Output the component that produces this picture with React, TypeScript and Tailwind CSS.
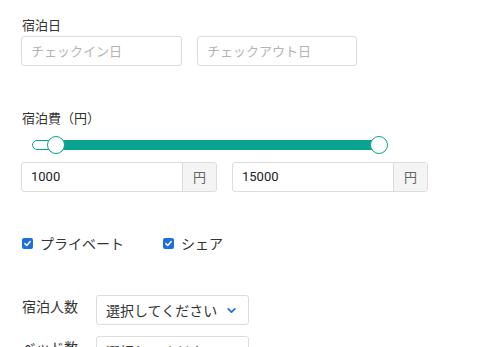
import { ChevronDown } from "lucide-react";

const font = { fontFamily: '"Noto Sans CJK JP", "Noto Sans", sans-serif' };

function Check() {
  return (
    <span className="inline-flex h-[11px] w-[11px] items-center justify-center rounded-[2px] bg-[#1d6fe0]">
      <svg viewBox="0 0 12 12" className="h-[9px] w-[9px]">
        <path d="M2.5 6.2 5 8.6 9.6 3.4" fill="none" stroke="white" strokeWidth="2" strokeLinecap="round" strokeLinejoin="round" />
      </svg>
    </span>
  );
}

function PriceInput({ value, w }: { value: string; w: string }) {
  return (
    <div className={`flex h-[30px] ${w} rounded-[3px] border border-[#dcdcdc] overflow-hidden`}>
      <div className="flex-1 flex items-center pl-[9px] text-[13px] text-[#222]" style={{ fontFamily: "Roboto, Arial, sans-serif" }}>
        {value}
      </div>
      <div className="w-[34px] flex items-center justify-center border-l border-[#dcdcdc] bg-[#f4f4f4] text-[13px] text-[#666]">
        円
      </div>
    </div>
  );
}

function SelectBox() {
  return (
    <div className="flex h-[30px] w-[153px] items-center rounded-[3px] border border-[#dcdcdc] bg-white pl-[9px] text-[14px] text-[#333]">
      <span>選択してください</span>
      <ChevronDown className="ml-[8px] h-[13px] w-[13px] text-[#1d6fe0]" strokeWidth={3.2} />
    </div>
  );
}

export default function App() {
  return (
    <div className="min-h-screen bg-white pl-[21px] pt-[15px] text-[#333]" style={font}>
      {/* 宿泊日 */}
      <div className="text-[13px] leading-[20px] pl-[1px]">宿泊日</div>
      <div className="mt-[1px] flex gap-[15px]">
        <div className="flex h-[30px] w-[161px] items-center rounded-[3px] border border-[#dcdcdc] pl-[9px] text-[13px] text-[#b4b4b4]">
          チェックイン日
        </div>
        <div className="flex h-[30px] w-[160px] items-center rounded-[3px] border border-[#dcdcdc] pl-[9px] text-[13px] text-[#b4b4b4]">
          チェックアウト日
        </div>
      </div>

      {/* 宿泊費 */}
      <div className="mt-[42px] text-[13px] leading-[20px] pl-[1px]">宿泊費（円）</div>
      <div className="relative mt-[7px] ml-[11px] h-[20px] w-[357px]">
        <div className="absolute left-0 right-[10px] top-[5px] h-[10px] rounded-full border border-[#0aa38d] bg-white" />
        <div className="absolute left-[24px] right-[10px] top-[5px] h-[10px] bg-[#0aa38d]" />
        <div className="absolute left-[15px] top-[1px] h-[18px] w-[18px] rounded-full border-[1.5px] border-[#0aa38d] bg-white" />
        <div className="absolute left-[338px] top-[1px] h-[18px] w-[18px] rounded-full border-[1.5px] border-[#0aa38d] bg-white" />
      </div>
      <div className="mt-[7px] flex gap-[15px]">
        <PriceInput value="1000" w="w-[196px]" />
        <PriceInput value="15000" w="w-[196px]" />
      </div>

      {/* チェック */}
      <div className="mt-[41px] flex items-center text-[14px]">
        <label className="flex items-center gap-[7px] pl-[1px]">
          <Check />
          <span>プライベート</span>
        </label>
        <label className="ml-[39px] flex items-center gap-[7px]">
          <Check />
          <span>シェア</span>
        </label>
      </div>

      {/* 選択 */}
      <div className="mt-[41px] flex flex-col gap-[11px]">
        <div className="flex">
          <div className="w-[75px] pl-[1px] pt-[1px] text-[14px]">宿泊人数</div>
          <SelectBox />
        </div>
        <div className="flex">
          <div className="w-[75px] pl-[1px] pt-[1px] text-[14px]">ベッド数</div>
          <SelectBox />
        </div>
      </div>
    </div>
  );
}
